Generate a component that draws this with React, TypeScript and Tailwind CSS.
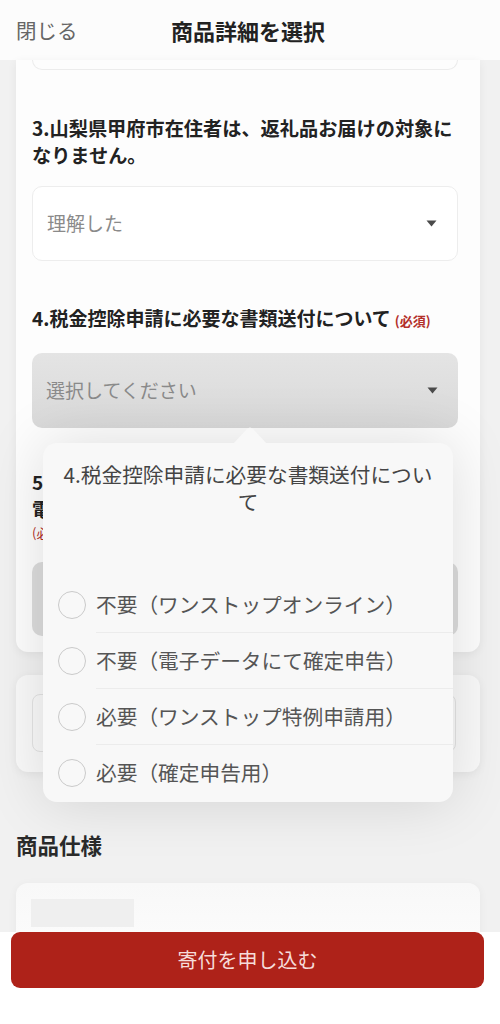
import React from "react";

const Caret = () => (
  <svg width="11" height="7" viewBox="0 0 11 7">
    <path d="M0.5 0.5h10L5.5 6.5z" fill="#4a4a4a" />
  </svg>
);

const options = [
  "不要（ワンストップオンライン）",
  "不要（電子データにて確定申告）",
  "必要（ワンストップ特例申請用）",
  "必要（確定申告用）",
];

export default function App() {
  return (
    <div className="relative w-[500px] h-[1024px] overflow-hidden bg-[#f1f1f1] font-['Noto_Sans_CJK_JP','Liberation_Sans',sans-serif] text-[#222]">
      {/* header */}
      <div className="h-[60px] bg-[#fcfcfc] grid grid-cols-[1fr_auto_1fr] items-center px-4">
        <span className="text-[20.5px] text-[#666]">閉じる</span>
        <span className="text-[22px] font-bold text-[#222] -ml-1">商品詳細を選択</span>
        <span />
      </div>

      {/* card 1 */}
      <div className="ml-4 mr-5 bg-[#fdfdfd] rounded-b-xl shadow-[0_2px_10px_rgba(0,0,0,0.06)] pl-4 pr-[22px] pb-4">
        <div className="h-[10px] border border-t-0 border-[#ececec] rounded-b-[10px]" />

        <p className="mt-[45px] text-[19.2px] leading-[27px] font-bold">
          3.山梨県甲府市在住者は、返礼品お届けの対象に
          <br />
          なりません。
        </p>
        <div className="mt-[17px] h-[75px] border border-[#ededed] rounded-[10px] bg-white flex items-center justify-between pl-[14px] pr-5">
          <span className="text-[19px] text-[#8a8a8a]">理解した</span>
          <Caret />
        </div>

        <p className="mt-[45px] text-[19px] leading-[24px] font-bold">
          4.税金控除申請に必要な書類送付について
          <span className="ml-1 text-[13px] text-[#b3302a]">(必須)</span>
        </p>
        <div className="mt-[20px] h-[75px] rounded-[10px] bg-gradient-to-b from-[#e4e4e4] to-[#d9d9d9] flex items-center justify-between pl-[14px] pr-5">
          <span className="text-[19px] text-[#8a8a8a]">選択してください</span>
          <Caret />
        </div>

        <p className="mt-[40px] text-[19px] leading-[27px] font-bold">
          5.ワンストップ特例申請書の送付先について
          <br />
          電子申請をご希望の方はこちら
        </p>
        <p className="text-[13px] leading-[22px] text-[#b3302a]">(必須)</p>
        <div className="mt-[18px] h-[74px] rounded-[10px] bg-[#dcdcdc] flex items-center justify-between pl-4 pr-5">
          <span className="text-[19px] text-[#8a8a8a]">選択してください</span>
          <Caret />
        </div>
      </div>

      {/* card 2 */}
      <div className="mt-[23px] ml-4 mr-5 h-[97px] bg-[#f9f9f9] rounded-xl shadow-[0_2px_10px_rgba(0,0,0,0.06)] pl-4 pr-[24px] pt-[19px]">
        <div className="h-[58px] border border-[#e3e3e3] rounded-[8px] flex items-center pl-[9px]">
          <span className="text-[18px] text-[#333]">日付指定なし</span>
        </div>
      </div>

      <h2 className="mt-[59px] px-4 text-[21.5px] leading-[28px] font-bold text-[#2a2a2a]">商品仕様</h2>

      {/* card 3 */}
      <div className="mt-[24px] ml-4 mr-5 h-[120px] bg-gradient-to-b from-[#f8f8f8] to-white rounded-t-xl shadow-[0_2px_10px_rgba(0,0,0,0.05)] pl-[15px] pt-4">
        <div className="w-[103px] h-[28px] bg-[#efefef]" />
      </div>

      {/* footer */}
      <div className="absolute left-0 right-0 top-[932px] bottom-0 bg-white pl-[11px] pr-4">
        <button className="w-full h-[56px] rounded-[9px] bg-[#ae2219] text-[20px] text-[#f6dcda]">
          寄付を申し込む
        </button>
      </div>

      {/* popover */}
      <div className="absolute left-[43px] top-[443px] w-[410px] h-[359px] rounded-[14px] bg-[#f8f8f8] shadow-[0_0_60px_rgba(0,0,0,0.13)]">
        <svg className="absolute left-[190px] -top-[17px]" width="34" height="18" viewBox="0 0 34 18">
          <path d="M0 18 L14 3 Q17 0 20 3 L34 18 Z" fill="#f8f8f8" />
        </svg>
        <p className="pt-[18px] text-center text-[20.7px] leading-[27px] text-[#444]">
          4.税金控除申請に必要な書類送付につい
          <br />
          て
        </p>
        <div className="absolute left-0 right-0 top-[134px]">
          {options.map((o, i) => (
            <div key={o} className="flex items-center h-[56px]">
              <span className="ml-[15px] mr-[10px] w-[28px] h-[28px] rounded-full border-[1.5px] border-[#cacaca] shrink-0" />
              <div
                className={
                  "flex-1 h-full flex items-center text-[20.7px] text-[#555] " +
                  (i < options.length - 1 ? "border-b border-[#ececec]" : "")
                }
              >
                {o}
              </div>
            </div>
          ))}
        </div>
      </div>
    </div>
  );
}
